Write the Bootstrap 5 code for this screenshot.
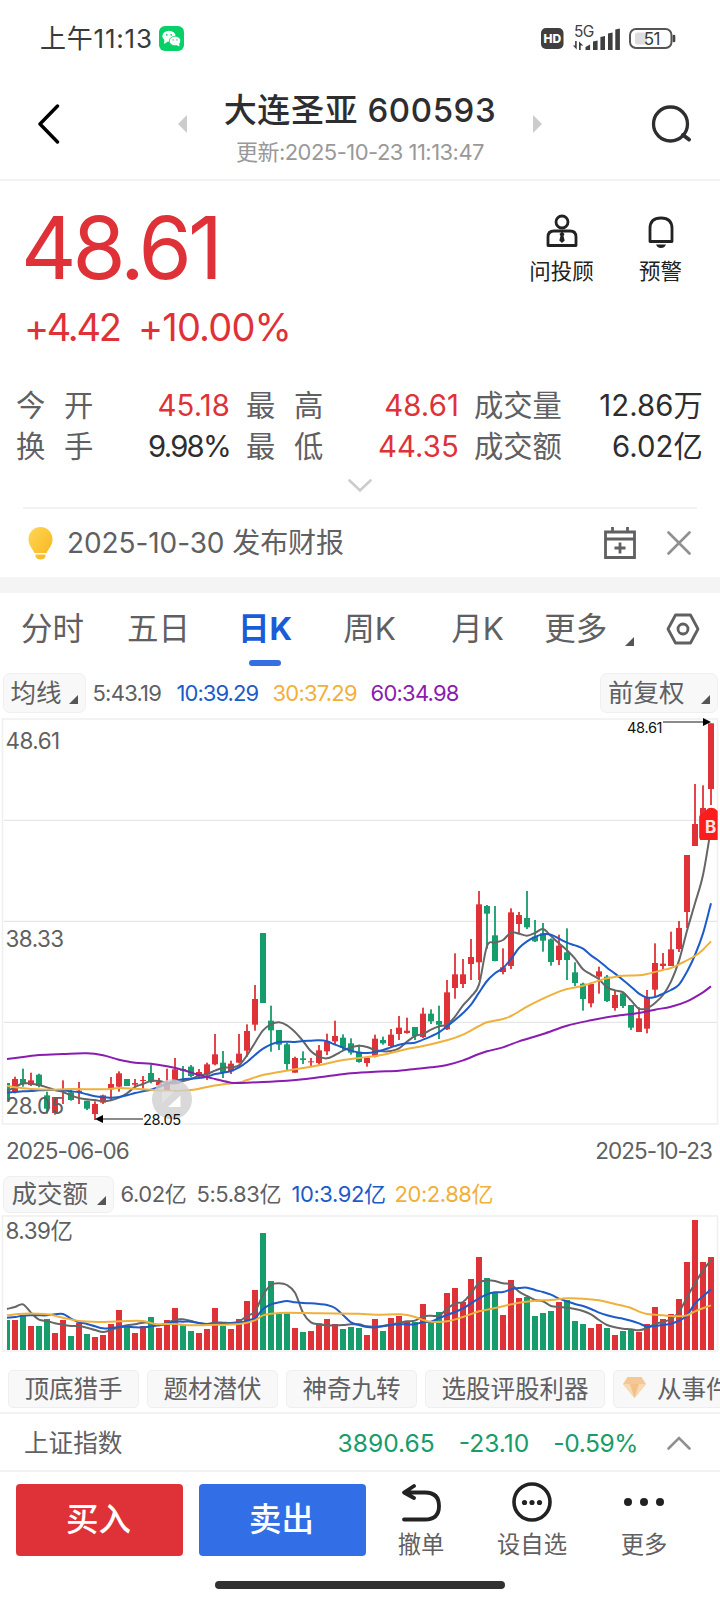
<!DOCTYPE html>
<html lang="zh-CN">
<head>
<meta charset="utf-8">
<meta name="viewport" content="width=device-width, initial-scale=1">
<title>大连圣亚 600593</title>
<link href="https://cdn.jsdelivr.net/npm/bootstrap@5.3.0/dist/css/bootstrap.min.css" rel="stylesheet">
<style>
:root{--up:#df3238;--down:#179c6b;--blue:#1c5bc8;--gold:#f0b03c;--purple:#8a1cb0;--ink:#606062}
body{width:720px;height:1600px;margin:0;overflow:hidden;background:#fff;color:var(--ink);font-family:Inter,"Noto Sans CJK SC",sans-serif;line-height:1;white-space:nowrap}
svg{display:block;flex:none}
.up{color:var(--up)}.down{color:var(--down)}.c-blue{color:var(--blue)}.c-gold{color:var(--gold)}.c-purple{color:var(--purple)}.dark{color:#2e2e30}
.statusbar{height:77px;padding:0 43px 0 40px;color:#3a3a3a}
.clock{font-size:26px;letter-spacing:.03em;width:119px}
.topbar{height:104px;border-bottom:2px solid #f3f3f3;padding:0 27px 8px 37px}
.title{font-size:33px;font-weight:500;letter-spacing:.018em;color:#2e2e30;line-height:36px;padding-top:6px}
.stamp{font-size:22px;letter-spacing:-.024em;color:#999;margin-top:13px}
.quote{height:200px}
.price{font-size:86px;letter-spacing:-.046em;margin:24px 0 0 21px;line-height:86px}
.change{font-size:38px;letter-spacing:-.06em;margin:17px 0 0 24px;height:38px}
.tool{font-size:21.5px;color:#222;width:99px}
.tool svg{margin-bottom:13px}
.stats{font-size:29.3px;line-height:41px;padding:4px 17px 0 16px}
.stats .k{width:90px}.stats .k span{display:inline-block;width:48px}
.stats b{font-weight:400;text-align:right;letter-spacing:.004em}
.notice{margin:0 23px;height:70px;border-top:2px solid #f2f2f2;font-size:28px;letter-spacing:-.003em;padding-left:5px;padding-right:6px}
.gap-band{height:16px;background:#f4f4f4}
.k-tabs{height:77px;font-size:31.5px}
.k-tabs>span{margin-bottom:5px}
.k-tabs .active{color:#1a5bd8;font-weight:700;position:relative}
.k-tabs .active::after{content:"";position:absolute;left:11px;bottom:-21px;width:32px;height:6px;border-radius:3px;background:#366fe2}
.pill{background:#f8f8f8;border:1px solid #efefef;border-radius:7px}
.legend-row{height:44px;padding:1px 2.5px 0;font-size:22px}
.legend-row .pill{height:40px;font-size:25.5px;padding:0 7px 0 7px}
.legend-row .vals{letter-spacing:-.035em}
.turn{width:0;height:0;border-left:9px solid transparent;border-bottom:9px solid #555}
.dates{height:48px;padding:2px 8px 0 6px;font-size:22.5px;letter-spacing:-.042em}
.vol-row{height:40px;padding:0 2.5px;font-size:22px;letter-spacing:-.02em}
.vol-row .pill{height:37px;width:111px;font-size:25.5px;letter-spacing:0;padding:0 7px 0 8px}
.tags{height:59px;padding:17px 0 0 8px;overflow:hidden}
.tags .pill{height:38px;font-size:24.5px;padding:0 15.5px;flex:none;border-radius:5px;margin-right:8px}
.index-row{height:60px;border-top:2px solid #f3f3f3;border-bottom:2px solid #f3f3f3;padding:2px 29px 0 24px;font-size:24.6px}
.trade{height:100px;padding:12px 0 0 16px}
.trade .btn{width:167px;height:72px;border:0;border-radius:4px;font-size:32.5px;font-weight:500;color:#fff;padding:0 2px 0 0}
.btn-buy{background:#df3238!important}.btn-sell{background:#326fe6!important}
.act{font-size:23.3px}
.act svg{margin-bottom:11px}
.home{width:290px;height:8px;border-radius:4px;background:#323232;margin:9px auto 0}
</style>
</head>
<body>
<div class="statusbar d-flex align-items-center">
  <span class="clock">上午11:13</span>
  <svg width="25" height="25" viewBox="0 0 25 25"><rect width="25" height="25" rx="6" fill="#07d069"/><ellipse cx="10" cy="10.2" rx="6.6" ry="5.5" fill="#fff"/><path d="M5.5 13.5L5 18l4-2.6z" fill="#fff"/><ellipse cx="16" cy="15" rx="5.7" ry="4.8" fill="#fff" stroke="#07d069" stroke-width=".8"/><path d="M17 18.8l3.5 1.6-.5-3.2z" fill="#fff"/><g fill="#07d069"><circle cx="7.8" cy="8.8" r=".9"/><circle cx="12.2" cy="8.8" r=".9"/><circle cx="14.2" cy="13.9" r=".7"/><circle cx="17.9" cy="13.9" r=".7"/></g></svg>
  <svg class="ms-auto" width="136" height="34" viewBox="541 22 136 34">
    <rect x="541" y="28" width="22.5" height="21" rx="5" fill="#3f3f3f"/><text x="552.3" y="43" font-size="12" font-weight="800" fill="#fff" text-anchor="middle">HD</text>
    <text x="574" y="37" font-size="15.5" fill="#3f3f3f" letter-spacing="-.6">5G</text>
    <g fill="#3f3f3f"><path d="M576.7 41v8.5l-3.8-4h2.2V41zM579 50v-8.500l4.300 4h-2.600V50z"/><path d="M585.500 50v-3l4.600-2.500V50zM593 50v-8.500l4.600-1V50zM600.400 50V37l4.600-1v14zM608 50V33.500l4.600-1V50zM615.300 50V29.500l4.600-1V50z"/></g>
    <rect x="630" y="29" width="41.500" height="19" rx="6" fill="none" stroke="#555" stroke-width="2"/><rect x="635" y="32.500" width="12" height="12" rx="2" fill="#ddd"/><path d="M674 36v5" stroke="#444" stroke-width="2.600" stroke-linecap="round"/>
    <text x="651.800" y="44.600" font-size="17" fill="#3a3a3a" text-anchor="middle" letter-spacing="-.6">51</text>
  </svg>
</div>

<header class="topbar d-flex align-items-center">
  <svg width="24" height="40" viewBox="0 0 24 40"><path d="M20.500 2L3 20l17.500 18" fill="none" stroke="#000" stroke-width="3.400" stroke-linecap="round" stroke-linejoin="round"/></svg>
  <svg style="margin-left:117px" width="9" height="18" viewBox="0 0 9 18"><path d="M9 0v18L0 9z" fill="#ccc"/></svg>
  <div class="text-center mx-auto"><div class="title">大连圣亚 600593</div><div class="stamp">更新:2025-10-23 11:13:47</div></div>
  <svg style="margin-right:109px" width="9" height="18" viewBox="0 0 9 18"><path d="M0 0v18l9-9z" fill="#ccc"/></svg>
  <svg width="42" height="40" viewBox="0 0 42 40"><circle cx="19.500" cy="20" r="17" fill="none" stroke="#2e2e30" stroke-width="3.300"/><path d="M32 31l6 4.500" stroke="#2e2e30" stroke-width="4" stroke-linecap="round"/></svg>
</header>

<section class="quote d-flex justify-content-between">
  <div>
    <div class="price up">48.61</div>
    <div class="change up d-flex"><span style="width:114px">+4.42</span><span style="letter-spacing:-.022em">+10.00%</span></div>
  </div>
  <div class="d-flex pt-4" style="padding-right:10px">
    <div class="tool d-flex flex-column align-items-center" style="padding-top:9px">
      <svg width="32" height="34" viewBox="0 0 32 34" fill="none" stroke="#222" stroke-width="2.800"><circle cx="16" cy="8" r="6"/><path d="M2 31.500V23q0-6 6-6h16q6 0 6 6v8.500z" stroke-linejoin="round"/><path d="M16 17.500l2.500 2.500-1 2 1.200 4.500-2.700 2.500-2.700-2.500 1.200-4.500-1-2z" fill="#222" stroke="none"/></svg>
      问投顾</div>
    <div class="tool d-flex flex-column align-items-center" style="padding-top:9px">
      <svg width="32" height="34" viewBox="0 0 32 34" fill="none" stroke="#222" stroke-width="2.800"><path d="M5 27.500V14.500Q5 4 16 4t11 10.500v13z" stroke-linejoin="round"/><path d="M11 30.500h10q-1.500 3.500-5 3.500t-5-3.500z" fill="#222" stroke="none"/></svg>
      预警</div>
  </div>
</section>

<section class="stats" style="height:91px">
  <div class="d-flex"><span class="k"><span>今</span>开</span><b class="up" style="width:124px">45.18</b><span class="k" style="margin-left:16px"><span>最</span>高</span><b class="up" style="width:123px">48.61</b><span style="margin-left:15px">成交量</span><b class="dark ms-auto">12.86万</b></div>
  <div class="d-flex"><span class="k"><span>换</span>手</span><b class="dark" style="width:124px;letter-spacing:-.06em">9.98%</b><span class="k" style="margin-left:16px"><span>最</span>低</span><b class="up" style="width:123px">44.35</b><span style="margin-left:15px">成交额</span><b class="dark ms-auto">6.02亿</b></div>
</section>
<div class="d-flex justify-content-center" style="height:35px;padding-top:7px"><svg width="24" height="14" viewBox="0 0 24 14"><path d="M1.500 1.500L12 11.500 22.500 1.500" fill="none" stroke="#ccc" stroke-width="2.600" stroke-linecap="round"/></svg></div>

<section class="notice d-flex align-items-center">
  <svg width="25" height="33" viewBox="0 0 25 33"><defs><linearGradient id="bulb" x1="0" y1="0" x2="1" y2="1"><stop offset="0" stop-color="#ffd857"/><stop offset="1" stop-color="#f8b31a"/></linearGradient></defs><path d="M12.500 0C5.500 0 .500 5.500.500 12.500c0 5.500 3.500 8.500 6 13.500h12c2.500-5 6-8 6-13.500C24.500 5.500 19.500 0 12.500 0zM7.500 27.500h10v2q-1 3-5 3t-5-3z" fill="url(#bulb)"/></svg>
  <span style="margin-left:14px">2025-10-30 发布财报</span>
  <svg class="ms-auto" width="32" height="34" viewBox="0 0 32 34" fill="none" stroke="#606062" stroke-width="2.800"><path d="M1.500 6h29v25.500h-29zM1.500 13h29M8.500 1v5M23.500 1v5M16 16.500v11M10.500 22h11"/></svg>
  <svg style="margin-left:31px" width="24" height="24" viewBox="0 0 24 24"><path d="M1.500 1.500l21 21M22.500 1.500l-21 21" stroke="#909092" stroke-width="2.600" stroke-linecap="round"/></svg>
</section>
<div class="gap-band"></div>

<nav class="k-tabs d-flex align-items-center" style="padding-left:21px">
  <span style="width:106px">分时</span><span style="width:111px">五日</span><span class="active">日K</span><span style="margin-left:51px;width:108px">周K</span><span style="width:93px">月K</span><span>更多</span>
  <i class="turn" style="margin:20px 0 0 18px"></i>
  <svg style="margin-left:32px;margin-bottom:5px" width="34" height="32" viewBox="0 0 34 32" fill="none" stroke="#606062" stroke-width="2.800" stroke-linejoin="round"><path d="M9.500 2h15L32 16l-7.500 14h-15L2 16z"/><circle cx="17" cy="16" r="5"/></svg>
</nav>
<div class="legend-row d-flex align-items-center">
  <span class="pill d-flex align-items-center">均线<i class="turn" style="margin:14px 0 0 7px"></i></span>
  <span class="vals" style="margin-left:7px;width:84px">5:43.19</span><span class="vals c-blue" style="width:96px;letter-spacing:-.043em">10:39.29</span><span class="vals c-gold" style="width:98px">30:37.29</span><span class="vals c-purple">60:34.98</span>
  <span class="pill d-flex align-items-center ms-auto">前复权<i class="turn" style="margin:14px 0 0 16px"></i></span>
</div>
<svg id="kline" width="720" height="412" viewBox="0 714 720 412"></svg>
<div class="dates d-flex justify-content-between align-items-center"><span>2025-06-06</span><span>2025-10-23</span></div>
<div class="vol-row d-flex align-items-center">
  <span class="pill d-flex align-items-center justify-content-between">成交额<i class="turn" style="margin-top:12px"></i></span>
  <span style="margin-left:7px;width:76px">6.02亿</span><span style="width:95px">5:5.83亿</span><span class="c-blue" style="width:103px">10:3.92亿</span><span class="c-gold">20:2.88亿</span>
</div>
<svg id="volume" width="720" height="139" viewBox="0 1214 720 139"></svg>
<div class="tags d-flex">
  <span class="pill d-flex align-items-center">顶底猎手</span><span class="pill d-flex align-items-center">题材潜伏</span><span class="pill d-flex align-items-center">神奇九转</span><span class="pill d-flex align-items-center">选股评股利器</span>
  <span class="pill d-flex align-items-center" style="padding-left:9px"><svg style="margin:-4px 11px 0 0" width="23" height="21" viewBox="0 0 23 21"><path d="M4.500 0h14L23 7 11.500 21 0 7z" fill="#f5c795"/><path d="M0 7h23L11.500 21z" fill="#f8d9b4"/><path d="M7 7h9l-4.500 14z" fill="#f3c08a"/></svg>从事件</span>
</div>
<div class="index-row d-flex align-items-center">
  <span>上证指数</span>
  <span class="down ms-auto">3890.65</span><span class="down" style="margin-left:24px">-23.10</span><span class="down" style="margin-left:24px;letter-spacing:-.018em">-0.59%</span>
  <svg style="margin-left:29px" width="24" height="14" viewBox="0 0 24 14"><path d="M1.500 12.500L12 2l10.500 10.500" fill="none" stroke="#909092" stroke-width="2.600" stroke-linecap="round"/></svg>
</div>
<div class="trade d-flex">
  <button class="btn btn-buy">买入</button><button class="btn btn-sell" style="margin-left:16px">卖出</button>
  <div class="act d-flex flex-column align-items-center" style="width:110px"><svg width="40" height="38" viewBox="0 0 40 38" fill="none" stroke="#222" stroke-width="3.800" stroke-linecap="round" stroke-linejoin="round"><path d="M13 2L3 8.500 13 14M4 8.500h20q14 0 14 13.500T24 35.500H3"/></svg>撤单</div>
  <div class="act d-flex flex-column align-items-center" style="width:112px"><svg style="margin-top:-2px" width="40" height="40" viewBox="0 0 40 40"><circle cx="20" cy="20" r="18" fill="none" stroke="#222" stroke-width="3.600"/><circle cx="12.500" cy="20.500" r="2.600" fill="#222"/><circle cx="20" cy="20.500" r="2.600" fill="#222"/><circle cx="27.500" cy="20.500" r="2.600" fill="#222"/></svg>设自选</div>
  <div class="act d-flex flex-column align-items-center" style="width:112px"><svg width="42" height="38" viewBox="0 0 42 38" fill="#222"><circle cx="5" cy="18" r="4"/><circle cx="21" cy="18" r="4"/><circle cx="37" cy="18" r="4"/></svg>更多</div>
</div>
<div class="home"></div>

<script src="https://cdn.jsdelivr.net/npm/bootstrap@5.3.0/dist/js/bootstrap.bundle.min.js"></script>
<script>
const UP = '#df3238', DOWN = '#179c6b', GRAY = '#666', BLUE = '#1c5bc8', GOLD = '#f0b03c', PURPLE = '#8a1cb0';
const px = i => 7 + 8 * i;

// Smooth curve through a list of [x, y] points
function curve(p, color) {
  let d = `M${p[0]}`;
  for (let i = 0; i < p.length - 1; i++) {
    const a = p[i - 1] || p[i], b = p[i], c = p[i + 1], e = p[i + 2] || c, h = c[0] - b[0];
    const s1 = (c[1] - a[1]) / (c[0] - a[0]), s2 = (e[1] - b[1]) / (e[0] - b[0]);
    d += `C${b[0] + h / 3},${b[1] + s1 * h / 3} ${c[0] - h / 3},${c[1] - s2 * h / 3} ${c}`;
  }
  return `<path d="${d}" fill="none" stroke="${color}" stroke-width="2" stroke-linejoin="round"/>`;
}
// Daily values, one per session, in thirds of a pixel from a base line
const daily = (base, v, first = 0) => v.map((y, i) => [px(first + i), base + y / 3]);
const sparse = (x0, y0, v) => v.map(([x, y]) => [x0 + x / 3, y0 + y / 3]);

// Candles: [base, first session, rows of "colour high top bottom low"]
const candles = [
 [900, 0, `g 549 549 602 602|r 530 537 576 580|g 506 537 553 560|r 518 541 555 558|g 521 524 558 562|g 575 586 626 641|r 591 591 639 644|r 541 572 574 612|g 570 577 600 602|r 546 572 576 612|g 602 602 626 630|r 604 612 642 660|r 584 586 608 612|r 531 552 568 602|r 514 520 560 575|g 537 537 558 558|r 537 549 554 564|r 528 540 543 566|g 494 519 546 550|r 534 546 556 562|r 506 552 570 575|r 474 508 543 550|g 498 507 512 538|g 495 500 528 532|r 507 516 528 532|r 488 493 524 540|r 402 463 493 496|g 453 488 518 534|r 482 491 514 522|r 402 461 488 490`],
 [880, 30, `r 433 453 512 530|r 315 357 434 452|g 159 159 369 369|g 377 422 451 515|g 450 450 494 510|g 488 493 552 570|r 530 534 578 578|g 514 535 540 552|r 534 544 547 559|r 495 511 549 557|r 461 485 514 525|r 422 468 484 492|g 463 473 503 510|g 475 490 518 524|g 494 515 546 548|r 533 533 549 560|r 464 476 530 532|g 470 480 490 494|r 447 464 498 504|r 408 443 462 480|r 413 452 459 461|g 441 441 468 480|r 383 401 471 474|g 388 401 424 432|g 377 423 434 477|r 300 337 448 450|r 220 283 324 356|r 237 283 312 324|r 177 231 252 300|r 33 73 247 300|g 75 78 101 206|g 78 166 243 244|r 205 262 276 283|r 85 97 258 267|r 96 105 132 160|g 33 114 142 147|g 120 170 184 186|g 129 160 182 215|g 175 178 246 257|r 164 197 240 255|g 145 217 240 300|g 247 277 309 318|g 308 311 357 392|r 308 312 370 382|r 260 274 290 341|g 285 290 363 366|r 332 345 384 392|g 335 340 378 384|g 375 375 443 450|r 382 415 456 456|r 330 352 446 460|r 190 249 329 350|r 219 251 258 268|r 155 208 258 258|r 123 144 207 216|r -75 -75 96 144`],
 [700, 86, `r 252 372 438 438|r 256 324 420 420|r 70 70 267 315`]];
const body = (i, top, bottom, color) => { const l = i ? px(i) - 3 : 7, w = i ? 6 : 3; return `<rect x="${l}" y="${top}" width="${w}" height="${bottom - top}" fill="${color}"/>`; };

let k = '<rect x="2.5" y="719" width="715" height="405" fill="none" stroke="#f0f0f0" stroke-width="1.6"/>';
for (const y of [820.3, 921.4, 1022.4]) k += `<path d="M4 ${y}H717" stroke="#e6e6e6" stroke-width="1.2"/>`;
const label = (x, y, t, extra = 'font-size="22.4" letter-spacing="-.5" fill="#606062"') => `<text x="${x}" y="${y}" ${extra}>${t}</text>`;
for (const [base, first, rows] of candles) rows.split('|').forEach((r, n) => {
  const [c, ...v] = r.split(' '), [hi, top, bot, lo] = v.map(y => base + y / 3), i = first + n, col = c === 'r' ? UP : DOWN;
  k += (i ? `<rect x="${px(i) - .9}" y="${hi}" width="1.8" height="${lo - hi}" fill="${col}"/>` : '') + body(i, top, bot, col);
});
k += label(5.500, 749, '48.61') + label(5.500, 946.5, '38.33') + label(5.500, 1113.500, '28.05');
k += curve([...daily(900, [572,562,550,551,555,562,570,576,586,594,598,600,604,601,593,580,561,552,543,543,549,550,543,537,527,522,512,503,502,496]),
  ...daily(880, [526,488,451,433,427,436,456,483,514,530,535,525,512,502,497,501,510,514,513,505,485,468,462,449,439,434,410,376,350,314,248,198,188,180,158,161,167,159,147,168,190,211,236,268,283,298,322,331,337,361,386,385,369,345,305,242,152,70,-15,-155].filter((_, n) => n !== 30), 30)], GRAY);
k += curve([...daily(900, [578,576,574,573,571,570,570,571,574,577,583,589,592,593,591,586,579,574,569,561,551,543,538,536,534,530,522,518,513,502]),
  ...daily(880, [546,525,506,493,486,485,486,483,482,481,484,494,503,512,518,519,516,510,502,494,490,488,479,469,457,439,420,399,374,338,303,280,264,237,204,184,171,163,164,176,188,196,206,226,243,263,281,300,320,341,353,351,341,330,314,275,225,160,70], 30)], BLUE);
k += curve([...sparse(0, 900, [[21,557],[45,562],[93,567],[165,569],[213,567],[309,568],[357,564],[405,566],[453,569],[501,573],[573,570],[621,561],[669,553]]),
  ...sparse(240, 880, [[0,607],[21,600],[69,585],[117,576],[165,568],[237,556],[309,540],[357,534],[429,524],[501,507],[549,498],[621,481],[669,464]]),
  ...sparse(480, 880, [[-3,438],[21,427],[69,417],[93,408],[141,380],[189,356],[237,335],[261,327],[309,317],[357,302],[381,295],[429,287],[477,286],[501,282],[549,270],[573,264],[597,253],[645,228],[669,209],[693,184]])], GOLD);
k += curve([...sparse(0, 900, [[21,477],[69,471],[117,465],[189,462],[261,460],[309,466],[357,479],[405,488],[453,491],[501,499],[549,510],[597,525],[645,537],[693,548]]),
  ...sparse(240, 880, [[0,609],[69,606],[141,602],[189,598],[261,589],[333,580],[405,575],[477,572],[525,567],[573,562],[621,555],[669,541]]),
  ...sparse(480, 880, [[-3,522],[21,514],[69,502],[117,484],[189,462],[261,437],[333,421],[405,408],[477,399],[525,389],[573,380],[621,364],[669,337],[693,319]])], PURPLE);
const small = 'font-size="14.6" letter-spacing="-.35" fill="#111"';
k += '<path d="M663 722H704M101 1119H143" stroke="#666" stroke-width="1.6"/><path d="M703 718v8l8-4zM103 1115v8l-8-4z" fill="#000"/>';
k += label(627, 732.500, '48.61', small);
k += '<circle cx="172" cy="1099.3" r="20" fill="#d0d0d0" fill-opacity=".8"/><path d="M180.500 1095.500V1107H168z" fill="#fff"/><path d="M162 1103.500L174.500 1091H162z" fill="#fff" fill-opacity=".25"/>';
k += label(143, 1124.500, '28.05', small);
k += '<path d="M717.700 811l-3-2.500q-4-1.500-7 0l-4 4.500q-4.500 1-4.500 4v20q0 3 3 3h15.500z" fill="#fb1d1d"/><text x="710.700" y="832.500" font-size="17" font-weight="700" fill="#ffe3e3" text-anchor="middle">B</text>';
document.getElementById('kline').innerHTML = k;

// Turnover bars: colour and top edge, in thirds of a pixel below y = 1160
const bars = 'g480 r480 g466 r498 g498 g477 r519 r480 g528 r488 g522 r531 r525 r492 r450 g502 r519 r498 g471 r504 r480 r444 g496 g513 r519 r507 r444 g498 r507 r477 r423 r390 g219 g363 g460 g460 r504 g516 r513 r490 r477 r492 g507 g501 g504 r525 r477 g513 r474 r468 r486 g486 r432 g485 g456 r399 r384 r426 r357 r291 g354 g399 r465 r360 r414 g411 g468 g459 g453 r426 g420 g483 g492 r504 r492 g504 r525 g513 g510 r516 r492 r441 r477 r462 r417 r306 r180 r306 r291';
let v = '<path d="M2.500 1351V1216H717.500V1351z" fill="none" stroke="#f0f0f0" stroke-width="1.6"/>';
v += label(5.500, 1239, '8.39亿');
bars.split(' ').forEach((b, i) => { v += body(i, 1160 + b.slice(1) / 3, 1350, b[0] === 'r' ? UP : DOWN); });
v += curve(daily(1160, [447,441,433,458,479,483,490,494,498,498,503,510,516,510,502,496,493,488,489,496,489,479,478,483,489,492,488,488,489,484,468,455,405,375,370,375,398,458,487,493,496,496,495,493,493,499,500,498,493,489,484,482,469,467,467,447,430,426,400,368,361,363,370,373,395,408,420,424,438,441,443,447,453,463,480,495,502,506,508,511,504,492,486,477,456,412,370,332,300]), GRAY);
v += curve(daily(1160, [473,471,467,466,466,466,463,462,476,487,492,499,505,504,501,500,502,502,499,496,491,485,485,485,489,492,491,491,490,489,482,474,447,433,427,423,427,429,430,432,435,444,465,487,495,501,502,499,495,493,493,493,486,485,474,465,456,445,430,415,403,397,396,388,384,383,390,396,404,416,424,432,438,447,458,466,472,476,482,490,500,498,495,491,482,466,430,409,388]), BLUE);
v += curve([...sparse(0, 1160, [[21,466],[69,461],[141,463],[189,473],[237,483],[309,486],[333,485],[429,483],[465,492],[525,492],[573,496],[621,495],[717,492],[765,481],[789,466],[813,461],[861,458],[957,460],[1077,461]]),
  ...sparse(360, 1160, [[45,464],[117,463],[141,465],[165,471],[189,480],[213,485],[261,484],[309,471],[357,454],[405,444],[477,428],[525,422],[573,420],[621,415],[669,416],[717,421],[765,432],[813,444],[837,455],[861,462],[909,466],[957,469],[981,466],[1005,454],[1053,436]])], GOLD);
document.getElementById('volume').innerHTML = v;
</script>
</body>
</html>
